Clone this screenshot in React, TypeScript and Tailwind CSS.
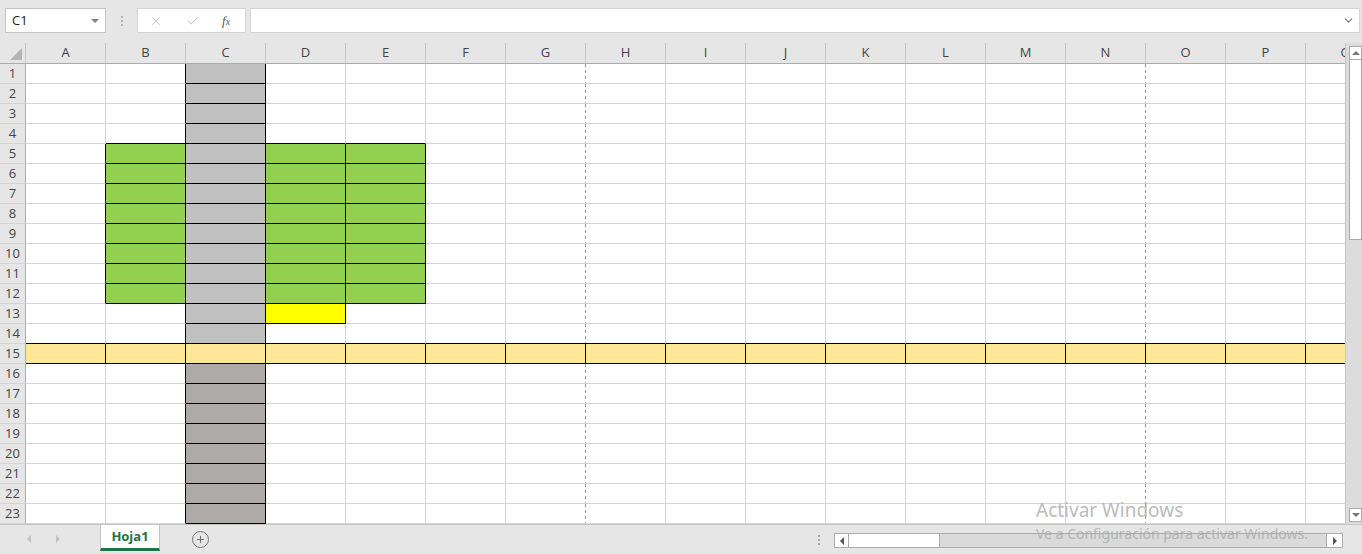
import React from 'react';
import { X, Check, ChevronDown, Plus } from 'lucide-react';

const COLS = 'ABCDEFGHIJKLMNOPQ'.split('');
const ROWS = Array.from({ length: 23 }, (_, i) => i + 1);
const LAST_ROW = 23;

// fill colour of a cell (row 1-based, col index 0-based)
const fillOf = (r: number, c: number): string | null => {
  if (r === 15) return 'bg-[#ffe699]';
  if (c === 2) return r <= 14 ? 'bg-[#c0c0c0]' : 'bg-[#aeaaaa]';
  if (r >= 5 && r <= 12 && (c === 1 || c === 3 || c === 4)) return 'bg-[#92d050]';
  if (r === 13 && c === 3) return 'bg-[#ffff00]';
  return null;
};

const boxed = (r: number, c: number) => r >= 1 && c >= 0 && c < COLS.length && r <= LAST_ROW + 1 && fillOf(r, c) !== null;

// page break after G and N
const breakCol = (c: number) => c === 6 || c === 13;

const Cell = ({ r, c }: { r: number; c: number }) => {
  const fill = fillOf(r, c) ?? 'bg-white';
  const rightBlack = boxed(r, c) || boxed(r, c + 1);
  const bottomBlack = boxed(r, c) || boxed(r + 1, c);
  const bottom = bottomBlack ? 'border-b-black' : 'border-b-[#d4d4d4]';

  if (breakCol(c) && !rightBlack) {
    return (
      <div className={`w-[80px] h-[20px] shrink-0 flex justify-end border-b ${bottom} ${fill}`}>
        <div className="w-px h-full bg-[repeating-linear-gradient(to_bottom,#9a9a9a_0_3px,transparent_3px_6px)]" />
      </div>
    );
  }
  return (
    <div
      className={`w-[80px] h-[20px] shrink-0 border-r border-b ${bottom} ${
        rightBlack ? 'border-r-black' : 'border-r-[#d4d4d4]'
      } ${fill}`}
    />
  );
};

const Sheet = () => (
  <div className="w-[1345px] overflow-hidden">
    {/* column headers */}
    <div className="flex h-[21px] border-b border-[#ababab] bg-[#e6e6e6]">
      <div className="w-[26px] shrink-0 border-r border-[#c6c6c6] flex items-end justify-end pr-[3px] pb-[3px]">
        <div className="w-0 h-0 border-l-[12px] border-l-transparent border-b-[12px] border-b-[#b4b4b4]" />
      </div>
      {COLS.map(col => (
        <div
          key={col}
          className="w-[80px] shrink-0 border-r border-[#c6c6c6] flex items-center justify-center text-[13px] text-[#444]"
        >
          {col}
        </div>
      ))}
    </div>
    {ROWS.map(r => (
      <div key={r} className="flex">
        <div className="w-[26px] h-[20px] shrink-0 border-r border-r-[#ababab] border-b border-b-[#d4d4d4] bg-[#e6e6e6] flex items-center justify-center pt-px text-[13px] text-[#444]">
          {r}
        </div>
        {COLS.map((_, c) => (
          <Cell key={c} r={r} c={c} />
        ))}
      </div>
    ))}
  </div>
);

const VScroll = () => (
  <div className="w-[17px] flex flex-col bg-[#dcdcdc] border-l border-[#c6c6c6] pl-[3px] pt-[3px] pb-[2px]">
    <div className="h-[14px] bg-white border border-[#ababab] flex items-center justify-center">
      <div className="w-0 h-0 border-l-[4px] border-l-transparent border-r-[4px] border-r-transparent border-b-[4px] border-b-[#777]" />
    </div>
    <div className="h-[180px] bg-white border border-t-0 border-[#ababab]" />
    <div className="flex-1" />
    <div className="h-[14px] bg-white border border-[#ababab] flex items-center justify-center">
      <div className="w-0 h-0 border-l-[4px] border-l-transparent border-r-[4px] border-r-transparent border-t-[4px] border-t-[#777]" />
    </div>
  </div>
);

const FormulaBar = () => (
  <div className="h-[43px] flex items-start pt-[8px] pl-[5px] gap-0">
    <div className="w-[101px] h-[25px] bg-white border border-[#c6c6c6] flex items-center justify-between pl-[6px] pr-[6px] text-[13px] text-[#222]">
      <span>C1</span>
      <div className="w-0 h-0 border-l-[4px] border-l-transparent border-r-[4px] border-r-transparent border-t-[4px] border-t-[#808080]" />
    </div>
    <div className="w-[31px] h-[25px] flex flex-col items-center justify-center gap-[2px]">
      <div className="w-[2px] h-[2px] bg-[#b4b4b4]" />
      <div className="w-[2px] h-[2px] bg-[#b4b4b4]" />
      <div className="w-[2px] h-[2px] bg-[#b4b4b4]" />
    </div>
    <div className="w-[109px] h-[25px] bg-white border border-[#d4d4d4] flex items-center pl-[11px]">
      <X size={14} strokeWidth={1.3} className="text-[#b0b0b0]" />
      <Check size={14} strokeWidth={1.5} className="text-[#b0b0b0] ml-[23px]" />
      <span className="ml-[22px] text-[13px] text-[#555] italic font-['Liberation_Serif',serif] leading-none">
        f<span className="text-[10px]">x</span>
      </span>
    </div>
    <div className="ml-[4px] w-[1110px] h-[25px] bg-white border border-[#d4d4d4] flex items-center justify-end pr-[4px]">
      <ChevronDown size={13} strokeWidth={2} className="text-[#777]" />
    </div>
  </div>
);

const BottomBar = () => (
  <div className="h-[30px] border-t border-[#c6c6c6] flex items-start">
    <div className="w-[100px] h-[28px] flex items-center">
      <div className="ml-[27px] w-0 h-0 border-t-[4px] border-t-transparent border-b-[4px] border-b-transparent border-r-[4px] border-r-[#c0c0c0]" />
      <div className="ml-[25px] w-0 h-0 border-t-[4px] border-t-transparent border-b-[4px] border-b-transparent border-l-[4px] border-l-[#c0c0c0]" />
    </div>
    <div className="w-[60px] h-[26px] bg-white border-x border-[#c6c6c6] border-b-[3px] border-b-[#217346] flex items-center justify-center text-[13px] font-bold text-[#217346]">
      Hoja1
    </div>
    <div className="ml-[32px] mt-[6px] w-[17px] h-[17px] rounded-full border border-[#777] flex items-center justify-center">
      <Plus size={11} strokeWidth={2} className="text-[#666]" />
    </div>
    <div className="ml-[609px] mt-[10px] flex flex-col gap-[2px]">
      <div className="w-[2px] h-[2px] bg-[#a8a8a8]" />
      <div className="w-[2px] h-[2px] bg-[#a8a8a8]" />
      <div className="w-[2px] h-[2px] bg-[#a8a8a8]" />
    </div>
    <div className="ml-[14px] mt-[8px] w-[509px] h-[15px] flex bg-[#dadada] border border-[#ababab]">
      <div className="w-[14px] bg-white border-r border-[#ababab] flex items-center justify-center">
        <div className="w-0 h-0 border-t-[4px] border-t-transparent border-b-[4px] border-b-transparent border-r-[4px] border-r-[#555]" />
      </div>
      <div className="w-[91px] bg-white border-r border-[#ababab]" />
      <div className="flex-1" />
      <div className="w-[16px] bg-white border-l border-[#ababab] flex items-center justify-center">
        <div className="w-0 h-0 border-t-[4px] border-t-transparent border-b-[4px] border-b-transparent border-l-[4px] border-l-[#555]" />
      </div>
    </div>
  </div>
);

export default function App() {
  return (
    <div className="relative w-[1362px] h-[554px] overflow-hidden bg-[#e6e6e6] font-['Open_Sans','Liberation_Sans',sans-serif]">
      <FormulaBar />
      <div className="flex h-[481px]">
        <Sheet />
        <VScroll />
      </div>
      <BottomBar />

      {/* Windows activation watermark */}
      <div className="absolute left-[1036px] top-[498px] text-[#a9a9a9]/80 font-['Noto_Sans','Open_Sans',sans-serif] pointer-events-none">
        <div className="text-[19px] leading-[24px]">Activar Windows</div>
        <div className="text-[14px] leading-[18px] mt-[3px]">Ve a Configuración para activar Windows.</div>
      </div>
    </div>
  );
}
